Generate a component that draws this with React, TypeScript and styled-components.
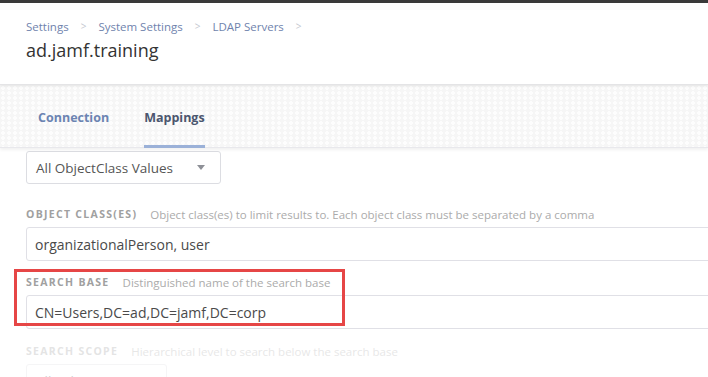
import React from "react";
import styled, { createGlobalStyle } from "styled-components";

const Global = createGlobalStyle`
  html, body { margin: 0; padding: 0; background: #fff; overflow: hidden; }
  body { font-family: "Open Sans", Lato, "Liberation Sans", sans-serif; }
  * { box-sizing: border-box; }
`;

const Page = styled.div`
  width: 708px;
  height: 377px;
  overflow: hidden;
  display: flex;
  flex-direction: column;
  border-top: 3px solid #3a3a3a;
  & > * { flex-shrink: 0; }
`;

const Header = styled.header`
  height: 82px;
  padding: 15px 26px 0;
  background: #fff;
  position: relative;
  z-index: 2;
  border-bottom: 1px solid #e4e4e6;
  box-shadow: 0 1px 3px rgba(0, 0, 0, 0.08);
`;

const Crumbs = styled.nav`
  display: flex;
  align-items: center;
  font-size: 11.5px;
  height: 16px;
`;

const Crumb = styled.span`
  color: #6f83ad;
`;

const Sep = styled.span`
  color: #c4c8d0;
  font-size: 10px;
  margin: 0 12px;
`;

const Title = styled.h1`
  margin: 3px 0 0;
  font-size: 18px;
  line-height: 26px;
  font-weight: 400;
  color: #333;
`;

const TabBand = styled.div`
  height: 63px;
  display: flex;
  align-items: flex-end;
  padding-left: 38px;
  gap: 35px;
  background-color: #f6f6f6;
  background-image: radial-gradient(circle at 3px 3px, #fdfdfd 1.6px, transparent 2px);
  background-size: 6px 5px;
  border-bottom: 1px solid #e8e8ec;
  box-shadow: 0 2px 3px rgba(0, 0, 0, 0.06);
  position: relative;
  z-index: 1;
`;

const Tab = styled.div<{ $active?: boolean }>`
  font-size: 12.5px;
  font-weight: 700;
  line-height: 18px;
  color: ${(p) => (p.$active ? "#4b566f" : "#6c84b2")};
  padding-bottom: 18px;
  border-bottom: 3px solid ${(p) => (p.$active ? "#9bb1d8" : "transparent")};
  margin-bottom: -1px;
`;

const Content = styled.div`
  padding: 3px 0 0 26px;
  display: flex;
  flex-direction: column;
  width: 760px;
`;

const Select = styled.div<{ $w: number }>`
  width: ${(p) => p.$w}px;
  height: 33px;
  border: 1px solid #dcdde2;
  border-radius: 3px;
  display: flex;
  align-items: center;
  justify-content: space-between;
  padding: 0 10px 0 9px;
  font-size: 13.5px;
  color: #555;
`;

const Caret = styled.span`
  width: 0;
  height: 0;
  border-left: 4px solid transparent;
  border-right: 4px solid transparent;
  border-top: 5px solid #8e9097;
  margin-right: 5px;
`;

const Field = styled.div<{ $faded?: boolean; $gap: number }>`
  position: relative;
  display: flex;
  flex-direction: column;
  margin-top: ${(p) => p.$gap}px;
  opacity: ${(p) => (p.$faded ? 0.28 : 1)};
`;

const LabelRow = styled.div`
  display: flex;
  align-items: center;
  height: 16px;
  margin-bottom: 5px;
  white-space: nowrap;
`;

const Label = styled.span`
  font-size: 10.5px;
  font-weight: 700;
  letter-spacing: 1.3px;
  color: #a0a0a0;
  margin-right: 13px;
`;

const Hint = styled.span`
  font-size: 11.5px;
  color: #ababab;
`;

const Input = styled.div`
  height: 34px;
  border: 1px solid #e0e0e6;
  border-radius: 3px;
  display: flex;
  align-items: center;
  padding: 0 8px;
  font-size: 14px;
  color: #4a4a4a;
`;

const Highlight = styled.div`
  position: absolute;
  left: -12px;
  top: -5px;
  width: 331px;
  height: 57px;
  border: 3px solid #e64646;
  pointer-events: none;
`;

export default function App() {
  return (
    <>
      <Global />
      <Page>
        <Header>
          <Crumbs>
            <Crumb>Settings</Crumb>
            <Sep>&gt;</Sep>
            <Crumb>System Settings</Crumb>
            <Sep>&gt;</Sep>
            <Crumb>LDAP Servers</Crumb>
            <Sep>&gt;</Sep>
          </Crumbs>
          <Title>ad.jamf.training</Title>
        </Header>
        <TabBand>
          <Tab>Connection</Tab>
          <Tab $active>Mappings</Tab>
        </TabBand>
        <Content>
          <Select $w={195}>
            <span>All ObjectClass Values</span>
            <Caret />
          </Select>
          <Field $gap={22}>
            <LabelRow>
              <Label>OBJECT CLASS(ES)</Label>
              <Hint>Object class(es) to limit results to. Each object class must be separated by a comma</Hint>
            </LabelRow>
            <Input>organizationalPerson, user</Input>
          </Field>
          <Field $gap={13}>
            <LabelRow>
              <Label>SEARCH BASE</Label>
              <Hint>Distinguished name of the search base</Hint>
            </LabelRow>
            <Input>CN=Users,DC=ad,DC=jamf,DC=corp</Input>
            <Highlight />
          </Field>
          <Field $faded $gap={14}>
            <LabelRow>
              <Label>SEARCH SCOPE</Label>
              <Hint>Hierarchical level to search below the search base</Hint>
            </LabelRow>
            <Select $w={141}>
              <span>All Subtrees</span>
              <Caret />
            </Select>
          </Field>
        </Content>
      </Page>
    </>
  );
}
